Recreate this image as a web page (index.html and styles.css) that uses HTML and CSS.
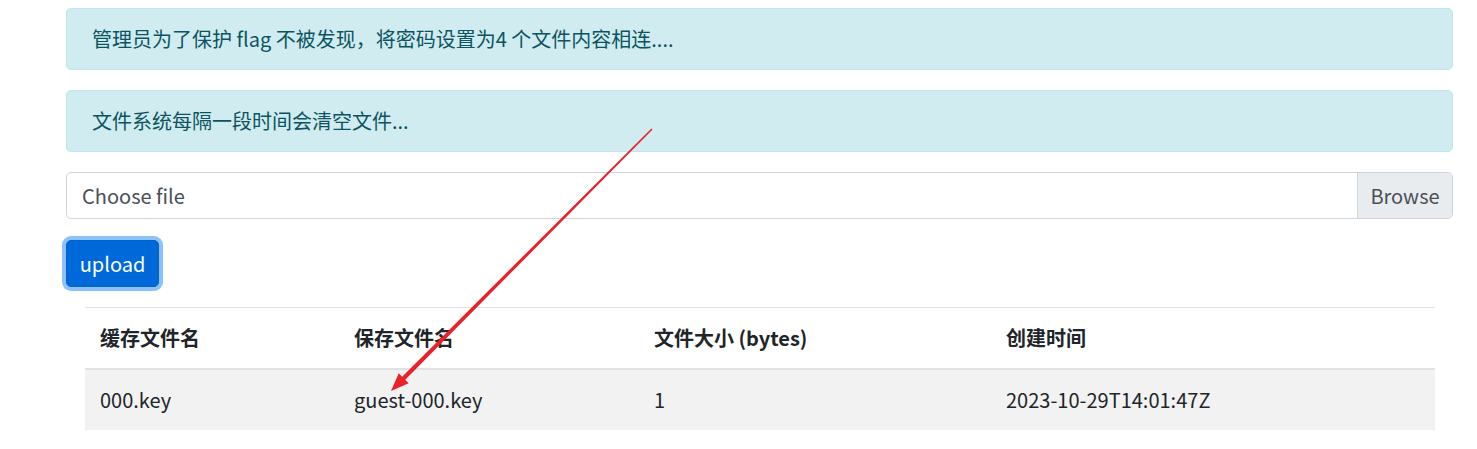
FILE: index.html
```html
<!DOCTYPE html>
<html lang="zh">
<head>
<meta charset="utf-8">
<title>upload</title>
<link rel="stylesheet" href="styles.css">
</head>
<body>
<div class="page">
  <div class="alert">管理员为了保护 flag 不被发现，将密码设置为4 个文件内容相连....</div>
  <div class="alert">文件系统每隔一段时间会清空文件...</div>
  <div class="file-input">
    <span class="file-label">Choose file</span>
    <span class="file-browse">Browse</span>
  </div>
  <button class="btn-upload" type="button">upload</button>
  <div class="table-wrap">
    <table class="files">
      <colgroup>
        <col class="c1">
        <col class="c2">
        <col class="c3">
        <col class="c4">
      </colgroup>
      <thead>
        <tr>
          <th>缓存文件名</th>
          <th>保存文件名</th>
          <th>文件大小 (bytes)</th>
          <th>创建时间</th>
        </tr>
      </thead>
      <tbody>
        <tr>
          <td>000.key</td>
          <td>guest-000.key</td>
          <td>1</td>
          <td>2023-10-29T14:01:47Z</td>
        </tr>
      </tbody>
    </table>
  </div>
</div>
<svg class="annot" width="1477" height="449" viewBox="0 0 1477 449">
  <polygon fill="#e8212a" points="652.57,129.56 405.26,379.8 408.66,383.19 391,391 398.74,373.31 402.14,376.7 651.43,128.44"/>
</svg>
</body>
</html>
```
FILE: styles.css
```css
html, body {
  margin: 0;
  padding: 0;
  background: #fff;
}
body {
  font-family: "Noto Sans CJK SC", "Noto Sans", sans-serif;
  font-size: 20px;
  line-height: 30px;
  color: #212529;
  position: relative;
}
.page {
  padding: 8px 24px 8px 66px;
  display: flex;
  flex-direction: column;
  align-items: stretch;
}
.alert {
  background: #d1ecf1;
  border: 1px solid #bee5eb;
  color: #0c5460;
  border-radius: 5px;
  padding: 15px 25px;
  margin-bottom: 20px;
  height: 30px;
}
.file-input {
  display: flex;
  height: 45px;
  border: 1px solid #ced4da;
  border-radius: 5px;
  overflow: hidden;
  color: #495057;
  margin-bottom: 21px;
}
.file-label {
  flex: 1;
  padding: 7.5px 15px;
}
.file-browse {
  background: #e9ecef;
  border-left: 1px solid #ced4da;
  padding: 7.5px 0;
  width: 94px;
  text-align: center;
}
.btn-upload {
  align-self: flex-start;
  margin: 0 0 20px 0;
  font-family: inherit;
  font-size: 20px;
  line-height: 30px;
  color: #fff;
  background: #0069d9;
  border: 1px solid #0062cc;
  border-radius: 5px;
  padding: 7.5px 0;
  width: 93px;
  height: 47px;
  text-align: center;
  box-shadow: 0 0 0 4px #8dc1f8;
}
.table-wrap {
  padding: 0 18px 0 19px;
}
.files {
  width: 100%;
  border-collapse: collapse;
  table-layout: fixed;
}
.files th, .files td {
  text-align: left;
  padding: 15px;
  border-top: 1px solid #dee2e6;
  vertical-align: top;
}
.files th {
  font-weight: bold;
  border-bottom: 2px solid #dee2e6;
}
.files td {
  border-top: none;
}
.files tbody tr {
  background: #f2f2f2;
}
.c1 { width: 254px; }
.c2 { width: 300px; }
.c3 { width: 352px; }
.annot {
  position: absolute;
  left: 0;
  top: 0;
  pointer-events: none;
}
```
